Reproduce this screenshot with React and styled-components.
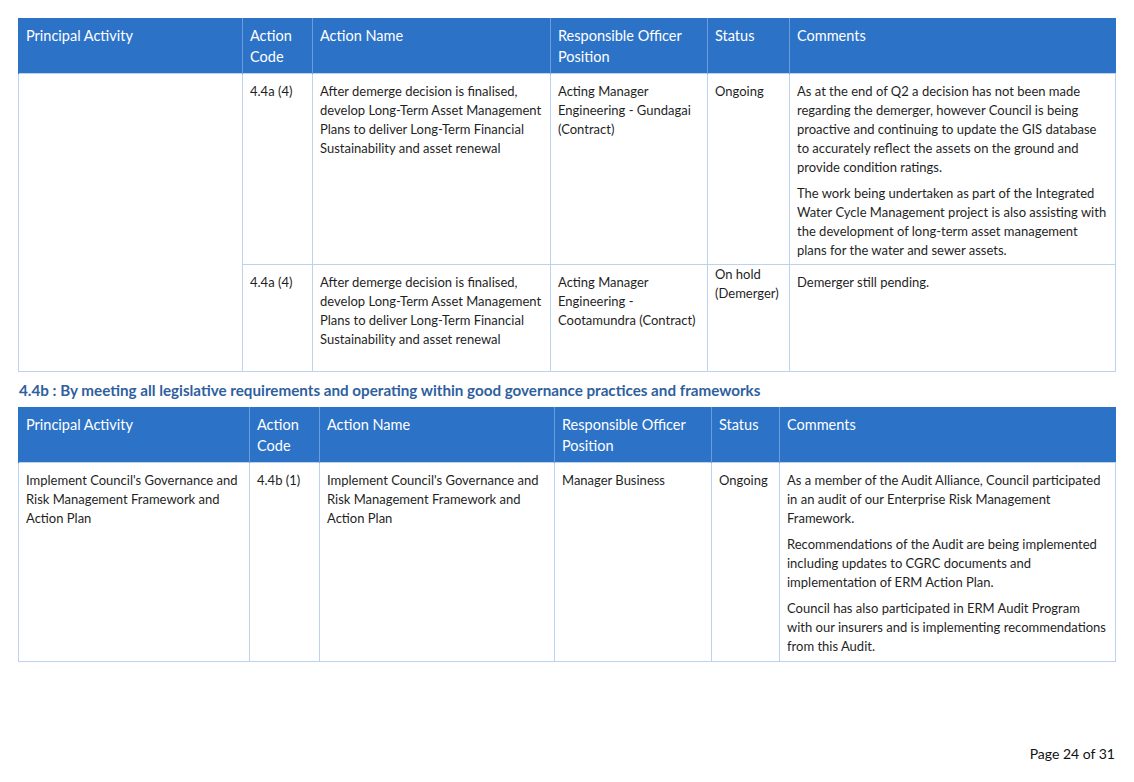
import React from "react";
import styled, { createGlobalStyle } from "styled-components";

const Global = createGlobalStyle`
  html, body { margin: 0; padding: 0; background: #fff; }
  body { font-family: Lato, "Open Sans", sans-serif; color: #222; }
`;

const Page = styled.div`
  width: 1134px; height: 782px; box-sizing: border-box;
  padding: 18px 19px 0 18px; display: flex; flex-direction: column; position: relative;
`;

const Table = styled.table`
  width: 1097px; border-collapse: collapse; table-layout: fixed;
`;

const Th = styled.th`
  background: #2c72c7; color: #fff; font-weight: 400; text-align: left;
  font-size: 14.5px; line-height: 21px; padding: 7px 7px 6px; vertical-align: top;
  border-left: 1px solid #6b9ddb; height: 42px;
  &:first-child { border-left: 1px solid #2c72c7; }
`;

const Td = styled.td`
  font-size: 13px; line-height: 19px; padding: 8px 7px 0; vertical-align: top;
  border: 1px solid #bcd3ee; color: #1f1f1f;
  p { margin: 0 0 7px; }
  p:last-child { margin-bottom: 0; }
`;

const Heading = styled.div`
  color: #2f5f9e; font-weight: 700; font-size: 15.2px; line-height: 20px;
  margin: 8px 0 7px 1px;
`;

const Footer = styled.div`
  position: absolute; right: 19px; top: 745px; font-size: 14px; color: #111;
`;

const cols1 = [224, 70, 238, 157, 82, 326];
const cols2 = [231, 70, 235, 157, 68, 336];
const heads = ["Principal Activity", <>Action<br/>Code</>, "Action Name", <>Responsible Officer<br/>Position</>, "Status", "Comments"];

const Cols = ({ w }) => <colgroup>{w.map((x, i) => <col key={i} style={{ width: x }} />)}</colgroup>;
const Head = () => <thead><tr>{heads.map((h, i) => <Th key={i}>{h}</Th>)}</tr></thead>;

const actionName = <>After demerge decision is finalised, develop Long-Term Asset Management Plans to deliver Long-Term Financial Sustainability and asset renewal</>;

export default function App() {
  return (
    <Page>
      <Global />
      <Table>
        <Cols w={cols1} />
        <Head />
        <tbody>
          <tr style={{ height: 191 }}>
            <Td rowSpan={2}></Td>
            <Td>4.4a (4)</Td>
            <Td>{actionName}</Td>
            <Td>Acting Manager Engineering - Gundagai (Contract)</Td>
            <Td>Ongoing</Td>
            <Td>
              <p>As at the end of Q2 a decision has not been made regarding the demerger, however Council is being proactive and continuing to update the GIS database to accurately reflect the assets on the ground and provide condition ratings.</p>
              <p>The work being undertaken as part of the Integrated Water Cycle Management project is also assisting with the development of long-term asset management plans for the water and sewer assets.</p>
            </Td>
          </tr>
          <tr style={{ height: 107 }}>
            <Td>4.4a (4)</Td>
            <Td>{actionName}</Td>
            <Td>Acting Manager Engineering - Cootamundra (Contract)</Td>
            <Td style={{ paddingTop: 0 }}>On hold (Demerger)</Td>
            <Td>Demerger still pending.</Td>
          </tr>
        </tbody>
      </Table>
      <Heading>4.4b : By meeting all legislative requirements and operating within good governance practices and frameworks</Heading>
      <Table>
        <Cols w={cols2} />
        <Head />
        <tbody>
          <tr style={{ height: 199 }}>
            <Td>Implement Council's Governance and Risk Management Framework and Action Plan</Td>
            <Td>4.4b (1)</Td>
            <Td>Implement Council's Governance and Risk Management Framework and Action Plan</Td>
            <Td>Manager Business</Td>
            <Td>Ongoing</Td>
            <Td>
              <p>As a member of the Audit Alliance, Council participated in an audit of our Enterprise Risk Management Framework.</p>
              <p>Recommendations of the Audit are being implemented including updates to CGRC documents and implementation of ERM Action Plan.</p>
              <p>Council has also participated in ERM Audit Program with our insurers and is implementing recommendations from this Audit.</p>
            </Td>
          </tr>
        </tbody>
      </Table>
      <Footer>Page 24 of 31</Footer>
    </Page>
  );
}
